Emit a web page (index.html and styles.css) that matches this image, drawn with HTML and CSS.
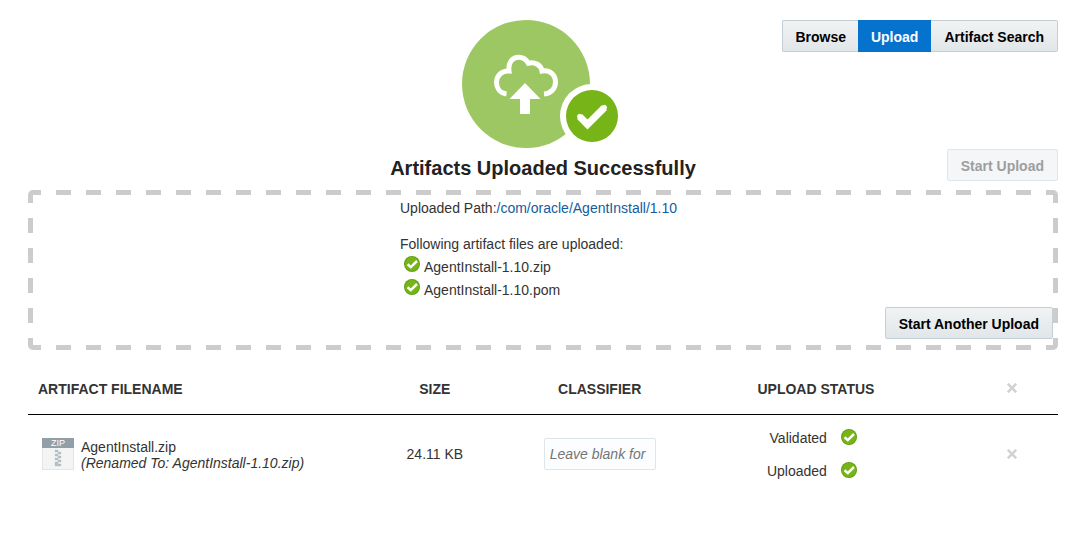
FILE: index.html
```
<!DOCTYPE html>
<html lang="en">
<head>
<meta charset="utf-8">
<title>Artifact Upload</title>
<link rel="stylesheet" href="styles.css">
</head>
<body>
<svg class="defs" width="0" height="0" aria-hidden="true">
  <symbol id="check" viewBox="0 0 16 16">
    <circle cx="8" cy="8" r="8" fill="#5f9c14"/>
    <circle cx="8" cy="8" r="7.2" fill="#76b417"/>
    <path d="M3.6 8.2 6.8 11.1 13 5" fill="none" stroke="#fff" stroke-width="2.5"/>
  </symbol>
  <symbol id="cross" viewBox="0 0 10 10">
    <path d="M.8.8 9.2 9.2M9.200.800.800 9.200" fill="none" stroke="#d2d2d2" stroke-width="2.6"/>
  </symbol>
</svg>
<main class="page">
  <header class="top">
    <div class="result">
      <svg class="result-art" width="162" height="128" viewBox="0 0 162 128" role="img" aria-label="Upload complete">
        <circle cx="64" cy="64" r="64" fill="#9dc762"/>
        <circle cx="130" cy="96" r="32" fill="#fff"/>
        <circle cx="130" cy="96" r="26" fill="#76b417"/>
        <path d="M44.500 74C37.500 73 34.500 67.500 34.500 62.500C34.500 55.500 40 50.500 47 51C46 43 50 37.300 56.500 37.300C61 37.300 64.300 39.500 66.200 43.200C73 41.500 79 45 80 51C88 49.500 93.500 55 93.500 62C93.500 68.500 89 73.500 82 74" fill="none" stroke="#fff" stroke-width="5"/>
        <path d="M63 63 78.500 79H68V93.500Q68 94 67.500 94H58.500Q58 94 58 93.500V79H47.500Z" fill="#fff"/>
        <path d="M117.500 96.500 125.500 104.500 142.500 87.500" fill="none" stroke="#fff" stroke-width="7"/>
        <path d="M117.500 96.500 125.500 104.500 142.500 87.500" fill="none" stroke="#fff" stroke-width="5" stroke-linecap="round"/>
      </svg>
      <h1 class="title">Artifacts Uploaded Successfully</h1>
    </div>
    <div class="actions">
      <nav class="tabs">
        <button class="btn" type="button">Browse</button>
        <button class="btn btn-active" type="button">Upload</button>
        <button class="btn" type="button">Artifact Search</button>
      </nav>
      <button class="btn" type="button" disabled>Start Upload</button>
    </div>
  </header>

  <section class="dropzone">
    <div class="details">
      <p class="path">Uploaded Path:<a class="link" href="#">/com/oracle/AgentInstall/1.10</a></p>
      <p class="intro">Following artifact files are uploaded:</p>
      <ul class="files">
        <li class="file"><svg class="check"><use href="#check"/></svg><span class="file-name">AgentInstall-1.10.zip</span></li>
        <li class="file"><svg class="check"><use href="#check"/></svg><span class="file-name">AgentInstall-1.10.pom</span></li>
      </ul>
    </div>
    <button class="btn btn-again" type="button">Start Another Upload</button>
  </section>

  <table class="artifacts">
    <thead>
      <tr>
        <th class="col-name" scope="col">ARTIFACT FILENAME</th>
        <th class="col-size" scope="col">SIZE</th>
        <th class="col-classifier" scope="col">CLASSIFIER</th>
        <th class="col-status" scope="col">UPLOAD STATUS</th>
        <th class="col-remove"><button class="remove" type="button" aria-label="Remove all"><svg class="cross"><use href="#cross"/></svg></button></th>
      </tr>
    </thead>
    <tbody>
      <tr>
        <td class="col-name">
          <div class="artifact">
            <svg class="zip" width="32" height="32" viewBox="0 0 32 32" aria-hidden="true">
              <rect x=".5" y=".5" width="31" height="31" fill="#f4f4f4" stroke="#e4e4e4"/>
              <path d="M0 0H32V10H0Z" fill="#919fa9"/>
              <text class="zip-text" x="16" y="8" text-anchor="middle">ZIP</text>
              <path d="M13 12h3v2h-3zM16 14h3v2h-3zM13 16h3v2h-3zM16 18h3v2h-3zM13 20h3v2h-3zM16 22h3v2h-3zM13 24h3v2h3v2h-6z" fill="#b4bfc8" stroke="#b4bfc8" stroke-width=".4"/>
            </svg>
            <div class="artifact-text">AgentInstall.zip<br><em>(Renamed To: AgentInstall-1.10.zip)</em></div>
          </div>
        </td>
        <td>24.11 KB</td>
        <td><input class="classifier" type="text" placeholder="Leave blank for" aria-label="Classifier"></td>
        <td>
          <div class="status">
            <span>Validated</span><svg class="check"><use href="#check"/></svg>
            <span>Uploaded</span><svg class="check"><use href="#check"/></svg>
          </div>
        </td>
        <td class="col-remove"><button class="remove" type="button" aria-label="Remove AgentInstall.zip"><svg class="cross"><use href="#cross"/></svg></button></td>
      </tr>
    </tbody>
  </table>
</main>
</body>
</html>
```
FILE: styles.css
```
* { box-sizing: border-box; }

body {
  margin: 0;
  background: #fff;
  color: #333;
  font: 14px/18px "Liberation Sans", Arial, sans-serif;
}

.defs { position: absolute; }

.page { padding: 20px 9px 20px 28px; }

.top {
  display: grid;
  grid-template-columns: 1fr auto 1fr;
  margin-bottom: 9px;
}

.result {
  grid-column: 2;
  display: flex;
  flex-direction: column;
  align-items: center;
}

.result-art { display: block; }

.title {
  margin: 8px 0 1px;
  color: #222;
  font-size: 20px;
  line-height: 24px;
}

.actions {
  display: flex;
  flex-direction: column;
  align-items: flex-end;
  justify-content: space-between;
}

.tabs { display: flex; }

.btn {
  height: 32px;
  padding: 2px 13px 0;
  border: 1px solid #c4ced7;
  border-radius: 2px;
  background: linear-gradient(#f1f3f3, #e1e6e9);
  color: #000;
  font: bold 14px/18px "Liberation Sans", Arial, sans-serif;
  white-space: nowrap;
}

.btn:disabled {
  border-color: #e1e6eb;
  background: #f4f6f7;
  color: #9e9e9e;
}

.tabs .btn:first-child {
  padding: 2px 12px 0;
  border-right: 0;
  border-radius: 2px 0 0 2px;
}

.tabs .btn:last-child { border-left: 0; border-radius: 0 2px 2px 0; }

.tabs .btn-active {
  padding: 2px 12px 0;
  border-color: #0572ce;
  border-radius: 0;
  background: #0572ce;
  color: #fff;
}

/* Long dashes on all four edges: 15px on, 15px off */
.dropzone {
  --h: repeating-linear-gradient(90deg, #ccc 0 15px, transparent 15px 30px);
  --v: repeating-linear-gradient(#ccc 0 15px, transparent 15px 30px);
  display: grid;
  grid-template-columns: 1fr 286px 1fr;
  min-height: 160px;
  padding: 9px 5px 11px;
  border-radius: 5px;
  background:
    var(--h) -2px 0 / 30px 5px repeat-x,
    var(--h) -2px 100% / 30px 5px repeat-x,
    var(--v) 0 -2px / 5px 30px repeat-y,
    var(--v) 100% -2px / 5px 30px repeat-y;
}

.details { grid-column: 2; }

.path { margin: 0 0 18px; }
.intro { margin: 0 0 2px; }

.link { color: #145c9e; text-decoration: none; }

.files {
  margin: 0;
  padding: 0 0 0 4px;
  list-style: none;
}

.file {
  display: flex;
  gap: 4px;
  height: 23px;
}

.file-name { padding-top: 3px; }

.check {
  display: block;
  width: 16px;
  height: 16px;
}

.file .check { margin-top: 1px; }

.btn-again { align-self: end; justify-self: end; }

.artifacts {
  width: 100%;
  border-collapse: collapse;
  table-layout: fixed;
}

.artifacts th {
  height: 64px;
  padding: 15px 0 0;
  border-bottom: 1px solid #000;
  text-align: center;
}

.artifacts td {
  height: 80px;
  padding: 0;
  text-align: center;
}

.artifacts .col-name { width: 30%; text-align: left; }
.artifacts th.col-name { padding-left: 10px; }
.artifacts td.col-name { padding-left: 14px; }
.artifacts th.col-remove { padding-top: 12px; }
.col-size { width: 19%; }
.col-classifier { width: 13%; }
.col-status { width: 29%; }

.artifact {
  display: flex;
  gap: 7px;
  white-space: nowrap;
}

.artifact-text { padding-top: 1px; line-height: 16px; }

.zip-text {
  fill: #fff;
  font: 9px "Liberation Sans", Arial, sans-serif;
}

.classifier {
  width: 112px;
  height: 32px;
  padding: 0 5px;
  border: 1px solid #dfe6e7;
  border-radius: 2px;
  background: #fcfdfe;
  color: #333;
  font: 14px/18px "Liberation Sans", Arial, sans-serif;
  vertical-align: middle;
}

.classifier::placeholder { color: #757575; font-style: italic; }

.status {
  display: grid;
  grid-template-columns: auto 16px;
  gap: 15px 14px;
  justify-content: center;
  padding-right: 8px;
  text-align: right;
}

.remove {
  display: block;
  margin: 0 auto;
  padding: 0;
  border: 0;
  background: none;
}

.cross {
  display: block;
  width: 10px;
  height: 10px;
}
```
